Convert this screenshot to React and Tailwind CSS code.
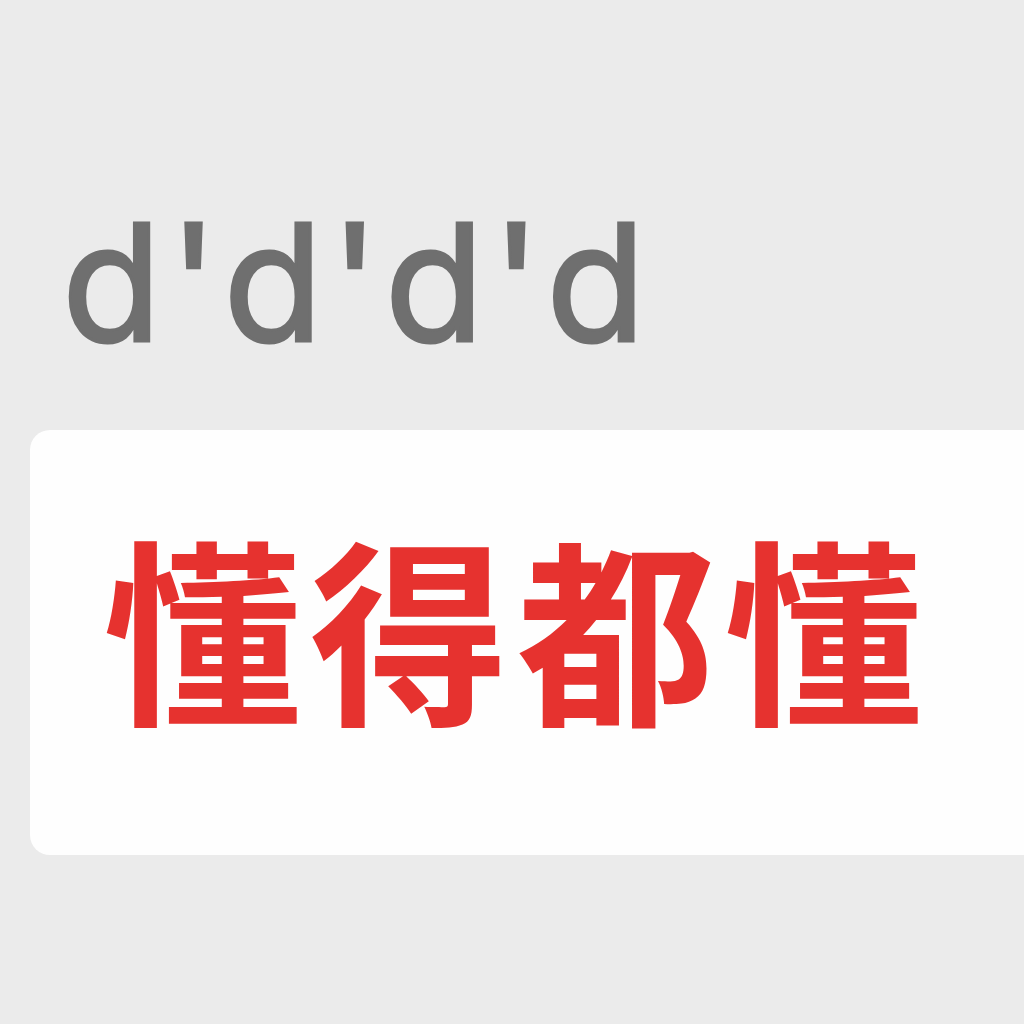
export default function App() {
  return (
    <div className="min-h-screen w-full overflow-hidden bg-[#ebebeb]">
      <div
        className="pl-[62px] pt-[201px] text-[162px] font-normal leading-none tracking-[8px] text-[#6f6f6f] [-webkit-text-stroke:3px_#6f6f6f]"
        style={{ fontFamily: 'Inter, "DejaVu Sans", sans-serif' }}
      >
        d'd'd'd
      </div>
      <div className="mt-[67px] ml-[30px] flex h-[425px] items-start rounded-l-[20px] bg-[#fefefe] pl-[73px] pt-[95px]">
        <div
          className="whitespace-nowrap text-[198px] font-bold leading-none tracking-[9px] text-[#e6322f]"
          style={{ fontFamily: '"Noto Sans CJK SC", sans-serif' }}
        >
          懂得都懂
        </div>
      </div>
    </div>
  );
}
